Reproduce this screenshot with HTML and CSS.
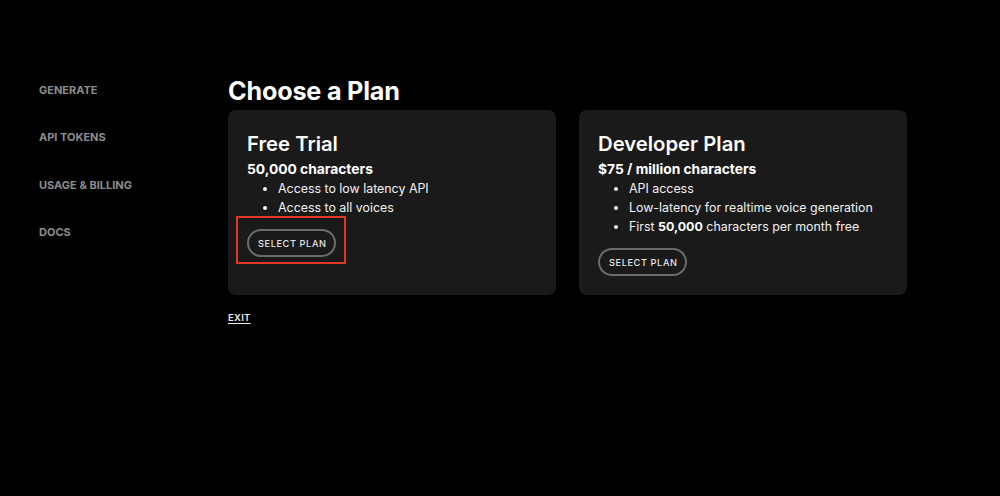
FILE: index.html
```html
<!DOCTYPE html>
<html>
<head>
<meta charset="utf-8">
<link rel="stylesheet" href="styles.css">
</head>
<body>
<div class="layout">
  <nav class="sidebar">
    <a class="nav-item">GENERATE</a>
    <a class="nav-item">API TOKENS</a>
    <a class="nav-item">USAGE &amp; BILLING</a>
    <a class="nav-item">DOCS</a>
  </nav>
  <main class="main">
    <h1 class="title">Choose a Plan</h1>
    <div class="plans">
      <section class="card">
        <h2 class="card-title">Free Trial</h2>
        <div class="price">50,000 characters</div>
        <ul class="features">
          <li>Access to low latency API</li>
          <li>Access to all voices</li>
        </ul>
        <div class="btn-wrap">
          <button class="btn">SELECT PLAN</button>
          <span class="highlight"></span>
        </div>
      </section>
      <section class="card">
        <h2 class="card-title">Developer Plan</h2>
        <div class="price">$75 / million characters</div>
        <ul class="features">
          <li>API access</li>
          <li>Low-latency for realtime voice generation</li>
          <li>First <b>50,000</b> characters per month free</li>
        </ul>
        <div class="btn-wrap">
          <button class="btn">SELECT PLAN</button>
        </div>
      </section>
    </div>
    <a class="exit">EXIT</a>
  </main>
</div>
</body>
</html>
```
FILE: styles.css
```css
html, body {
  margin: 0;
  padding: 0;
  background: #000;
  color: #fff;
  font-family: Inter, "Noto Sans", sans-serif;
}
.layout {
  display: flex;
  height: 496px;
}
.sidebar {
  width: 189px;
  padding-left: 39px;
  padding-top: 83px;
  display: flex;
  flex-direction: column;
  gap: 33.3px;
}
.nav-item {
  font-size: 11px;
  font-weight: 700;
  color: #8c8c8c;
  line-height: 14px;
}
.main {
  display: flex;
  flex-direction: column;
  align-items: flex-start;
  padding-top: 76px;
}
.title {
  margin: 0;
  font-size: 25.2px;
  font-weight: 700;
  line-height: 31px;
  letter-spacing: -0.2px;
  margin-bottom: 3px;
}
.plans {
  display: flex;
  gap: 23px;
}
.card {
  width: 290px;
  height: 147px;
  background: #1a1a1a;
  border-radius: 8px;
  padding: 20px 19px 18px;
  display: flex;
  flex-direction: column;
  align-items: flex-start;
}
.card-title {
  margin: 0;
  font-size: 20.3px;
  font-weight: 600;
  line-height: 28px;
}
.price {
  font-size: 13.8px;
  font-weight: 700;
  line-height: 19px;
  margin-top: 2px;
}
.features {
  margin: 0;
  padding-left: 31px;
  font-size: 12.4px;
  line-height: 19px;
  color: #f2f2f2;
}
.features b {
  font-weight: 700;
  color: #fff;
}
.btn-wrap {
  position: relative;
  margin-top: 12px;
}
.btn {
  display: block;
  height: 28px;
  padding: 0 9px;
  background: transparent;
  border: 2px solid #6b6b6b;
  border-radius: 14px;
  color: #e6e6e6;
  font-family: Inter, "Noto Sans", sans-serif;
  font-size: 9.2px;
  font-weight: 500;
  letter-spacing: 0.6px;
  white-space: nowrap;
  width: 89px;
}
.highlight {
  position: absolute;
  left: -11px;
  top: -13px;
  width: 106px;
  height: 44px;
  border: 2px solid #e0391f;
  pointer-events: none;
}
.exit {
  margin-top: 17px;
  font-size: 9.5px;
  font-weight: 600;
  color: #f0f0f0;
  text-decoration: underline;
  text-underline-offset: 2px;
  letter-spacing: 0.3px;
}
```
